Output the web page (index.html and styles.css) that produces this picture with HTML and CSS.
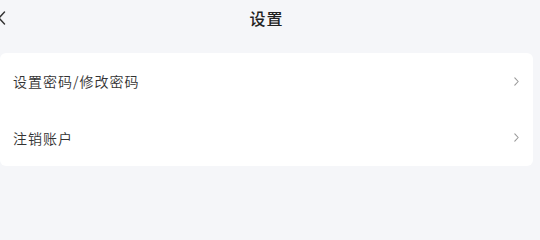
FILE: index.html
```html
<!DOCTYPE html>
<html lang="zh-CN">
<head>
<meta charset="utf-8">
<title>设置</title>
<link rel="stylesheet" href="styles.css">
</head>
<body>
<div class="page">
  <header class="nav">
    <span class="back">
      <svg width="8" height="14" viewBox="0 0 8 14"><path d="M6.5 1 L1 7 L6.5 13" fill="none" stroke="#333" stroke-width="1.4" stroke-linecap="round" stroke-linejoin="round"/></svg>
    </span>
    <h1 class="title">设置</h1>
  </header>
  <div class="card">
    <div class="row">
      <span class="label">设置密码/修改密码</span>
      <svg class="chev" width="5" height="9" viewBox="0 0 5 9"><path d="M0.8 0.8 L4.2 4.5 L0.8 8.2" fill="none" stroke="#999" stroke-width="1.1" stroke-linecap="round" stroke-linejoin="round"/></svg>
    </div>
    <div class="row">
      <span class="label">注销账户</span>
      <svg class="chev" width="5" height="9" viewBox="0 0 5 9"><path d="M0.8 0.8 L4.2 4.5 L0.8 8.2" fill="none" stroke="#999" stroke-width="1.1" stroke-linecap="round" stroke-linejoin="round"/></svg>
    </div>
  </div>
</div>
</body>
</html>
```
FILE: styles.css
```css
html, body {
  margin: 0;
  padding: 0;
  background: #f5f6f9;
  font-family: "Noto Sans CJK SC", "Noto Sans", sans-serif;
  color: #333;
  overflow: hidden;
}
.page {
  width: 547px;
  margin-left: -7px;
}
.nav {
  position: relative;
  height: 53px;
  display: flex;
  align-items: center;
  justify-content: center;
}
.back {
  position: absolute;
  left: 5px;
  top: 11px;
  display: flex;
}
.title {
  margin: 0;
  margin-top: -17px;
  font-size: 16px;
  font-weight: 500;
  color: #222;
  letter-spacing: 1px;
}
.card {
  margin: 0 7px;
  background: #fff;
  border-radius: 6px;
}
.row {
  height: 56px;
  display: flex;
  align-items: center;
  justify-content: space-between;
  padding: 0 14px 0 13px;
}
.row + .row {
  height: 57px;
}
.label {
  font-size: 14px;
  font-weight: 350;
  letter-spacing: 1px;
  color: #333;
}
.chev {
  display: block;
}
```
